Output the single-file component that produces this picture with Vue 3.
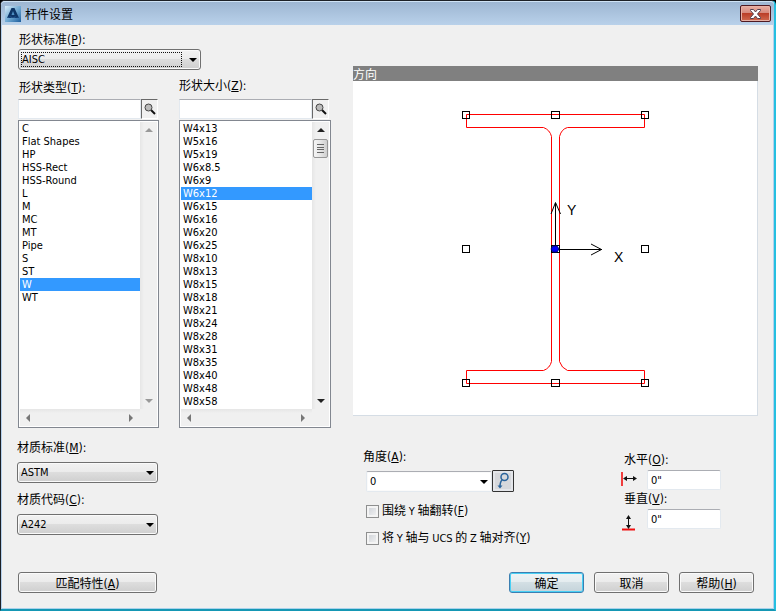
<script setup>
import { ref } from 'vue'

const types = ['C', 'Flat Shapes', 'HP', 'HSS-Rect', 'HSS-Round', 'L', 'M', 'MC', 'MT', 'Pipe', 'S', 'ST', 'W', 'WT']
const sizes = [
  'W4x13', 'W5x16', 'W5x19', 'W6x8.5', 'W6x9', 'W6x12', 'W6x15', 'W6x16', 'W6x20', 'W6x25', 'W8x10',
  'W8x13', 'W8x15', 'W8x18', 'W8x21', 'W8x24', 'W8x28', 'W8x31', 'W8x35', 'W8x40', 'W8x48', 'W8x58',
]
const lists = [
  { id: 'type', label: '形状类型', key: 'T', items: types, scrollable: false },
  { id: 'size', label: '形状大小', key: 'Z', items: sizes, scrollable: true },
]
const picked = ref({ type: 'W', size: 'W6x12' })
const materials = [
  { id: 'mat-std', label: '材质标准', key: 'M', value: 'ASTM' },
  { id: 'mat-code', label: '材质代码', key: 'C', value: 'A242' },
]
const handles = [
  [109.5, 30.5, 7], [198.5, 30.5, 8], [288.5, 30.5, 7],
  [109.5, 164.5, 7], [198.5, 164.5, 8], [288.5, 164.5, 7],
  [109.5, 298.5, 7], [198.5, 298.5, 8], [288.5, 298.5, 7],
]
const horizontal = ref('0"')
const vertical = ref('0"')
</script>

<template>
  <div class="window">
    <header class="titlebar">
      <svg class="logo" width="16" height="16" viewBox="0 0 16 16" aria-hidden="true">
        <defs>
          <linearGradient id="lg" x1="0" y1="0" x2="1" y2="1">
            <stop offset="0" stop-color="#d8ecf8" />
            <stop offset=".55" stop-color="#6aa5d0" />
            <stop offset="1" stop-color="#1c5c9c" />
          </linearGradient>
        </defs>
        <rect width="16" height="16" fill="url(#lg)" />
        <path d="M6.5 2h3l4.500 10-4-1.500L8 12l-2.500-1.500L2 12z" fill="#0d3566" />
        <path d="M8 5l1.500 4h-3z" fill="#4f90c4" />
        <path d="M2 12l4-2 2 1 2-1 4 2-4 0-2-1-2 1z" fill="#123f78" />
      </svg>
      <h1>杆件设置</h1>
      <button class="close" type="button" aria-label="关闭">
        <svg width="13" height="10" viewBox="0 0 13 10">
          <path d="M1.500.500h3l2 2.500 2-2.500h3v1L8.500 5l3 3.500v1h-3l-2-2.500-2 2.500h-3v-1l3-3.500-3-3.500z" fill="#fff" stroke="#52404f" />
        </svg>
      </button>
    </header>

    <main class="body">
      <div class="columns">
        <section class="left">
          <label class="caption" for="shape-std">形状标准<span class="key">(<u>P</u>):</span></label>
          <div class="combo standard">
            <select id="shape-std"><option>AISC</option></select>
            <span class="dots"></span>
            <svg class="arrow" width="8" height="4" viewBox="0 0 8 4"><path d="M0 0h8L4 4z" /></svg>
          </div>

          <div class="lists">
            <div v-for="l in lists" :key="l.id" class="list-col" :class="l.id">
              <label class="caption" :for="l.id">{{ l.label }}<span class="key">(<u>{{ l.key }}</u>):</span></label>
              <div class="search">
                <input type="text" :aria-label="l.label" />
                <button type="button" aria-label="搜索">
                  <svg width="12" height="12" viewBox="0 0 12 12">
                    <path d="M7 7l4 4" stroke="#111" stroke-width="2" />
                    <circle cx="4.500" cy="4.500" r="3.500" fill="#bbb" stroke="#444" />
                  </svg>
                </button>
              </div>
              <div class="listbox">
                <div class="rows">
                  <select :id="l.id" v-model="picked[l.id]" size="22">
                    <option v-for="i in l.items" :key="i" :value="i">{{ i }}</option>
                  </select>
                  <div class="vbar" :class="{ on: l.scrollable }">
                    <svg width="8" height="4" viewBox="0 0 8 4"><path d="M0 4h8L4 0z" /></svg>
                    <span v-if="l.scrollable" class="thumb"><i></i><i></i><i></i><i></i></span>
                    <svg class="end" width="8" height="4" viewBox="0 0 8 4"><path d="M0 0h8L4 4z" /></svg>
                  </div>
                </div>
                <div class="hbar">
                  <svg width="4" height="8" viewBox="0 0 4 8"><path d="M4 0v8L0 4z" /></svg>
                  <svg width="4" height="8" viewBox="0 0 4 8"><path d="M0 0v8l4-4z" /></svg>
                </div>
              </div>
            </div>
          </div>

          <div class="materials">
            <template v-for="m in materials" :key="m.id">
              <label class="caption" :for="m.id">{{ m.label }}<span class="key">(<u>{{ m.key }}</u>):</span></label>
              <div class="combo">
                <select :id="m.id"><option>{{ m.value }}</option></select>
                <svg class="arrow" width="8" height="4" viewBox="0 0 8 4"><path d="M0 0h8L4 4z" /></svg>
              </div>
            </template>
          </div>
        </section>

        <section class="right">
          <div class="preview">
            <h2>方向</h2>
            <svg class="drawing" viewBox="0 0 405 334" role="img" aria-label="方向">
              <path
                d="M113.500 33.500H291.500V46.500H214.500Q208.500 48 206.500 55.500V280.500Q208.500 287 214.500 289.500H291.500V302.500H113.500V289.500H190.500Q197 287 198.500 280.500V55.500Q197 49 190.500 46.500H113.500Z"
                fill="none" stroke="#f00"
              />
              <g fill="none" stroke="#000">
                <rect v-for="(h, n) in handles" :key="n" :x="h[0]" :y="h[1]" :width="h[2]" height="7" />
                <path d="M202.500 168.500V122M198 133L202.500 121.500 207.500 133M202.500 168.500H249M238 163L248.500 168.500 238 174" />
              </g>
              <path d="M200 165h4l2 3-2 3h-4l-2-3z" fill="#00f" stroke="#000080" stroke-width="1" />
              <text x="214" y="134">Y</text>
              <text x="261" y="181">X</text>
            </svg>
          </div>

          <div class="options">
            <div class="angle">
              <label class="caption" for="angle">角度<span class="key">(<u>A</u>):</span></label>
              <div class="angle-row">
                <div class="combo flat">
                  <select id="angle"><option>0</option></select>
                  <svg class="arrow" width="8" height="4" viewBox="0 0 8 4"><path d="M0 0h8L4 4z" /></svg>
                </div>
                <button class="pick" type="button" aria-label="拾取角度">
                  <svg width="14" height="18" viewBox="0 0 14 18" fill="none" stroke="#2a649c">
                    <circle cx="8.500" cy="5" r="3.500" stroke-width="1.500" />
                    <path d="M6 8Q4 10 4 15" stroke-width="1.500" />
                    <path d="M1.500 13.500L4 16.500 6.500 13.500z" fill="#2a649c" stroke="none" />
                  </svg>
                </button>
              </div>
              <label class="check"><input type="checkbox" /><span>围绕 <b>Y</b> 轴翻转<span class="key">(<u>F</u>)</span></span></label>
              <label class="check"><input type="checkbox" /><span>将 <b>Y</b> 轴与 <b>UCS</b> 的 <b>Z</b> 轴对齐<span class="key">(<u>Y</u>)</span></span></label>
            </div>

            <div class="offsets">
              <label class="caption" for="off-h">水平<span class="key">(<u>O</u>):</span></label>
              <div class="offset">
                <svg width="16" height="18" viewBox="0 0 16 18">
                  <path d="M.500 1v14M1.500 1v14" stroke="#f01010" stroke-opacity=".8" />
                  <path d="M3 7.500h12" stroke="#111" />
                  <path d="M2 7.500l4-2.500v5zM16 7.500l-4-2.500v5z" fill="#111" />
                </svg>
                <input id="off-h" v-model="horizontal" type="text" />
              </div>
              <label class="caption" for="off-v">垂直<span class="key">(<u>V</u>):</span></label>
              <div class="offset low">
                <svg width="16" height="18" viewBox="0 0 16 18">
                  <path d="M1 16.500h13" stroke="#f01010" stroke-width="2" />
                  <path d="M7.500 3v12" stroke="#111" />
                  <path d="M7.500 2L5 6h5zM7.500 16L5 12h5z" fill="#111" />
                </svg>
                <input id="off-v" v-model="vertical" type="text" />
              </div>
            </div>
          </div>
        </section>
      </div>

      <footer class="actions">
        <button class="btn wide" type="button">匹配特性<span class="key">(<u>A</u>)</span></button>
        <button class="btn primary" type="button">确定</button>
        <button class="btn" type="button">取消</button>
        <button class="btn" type="button">帮助<span class="key">(<u>H</u>)</span></button>
      </footer>
    </main>
  </div>
</template>

<style>
body {
  background: #000;
}
</style>

<style scoped>
* {
  box-sizing: border-box;
}
.window {
  --latin: "DejaVu Sans Condensed", "Noto Sans", "Noto Sans CJK SC", sans-serif;
  display: flex;
  flex-direction: column;
  min-height: 100vh;
  border: 1px solid #1c2026;
  border-right-width: 2px;
  border-right-color: #25bfe0;
  border-bottom: 2px solid #1597b4;
  border-radius: 5px 5px 0 0;
  background: #f0f0f0;
  box-shadow: inset 1px 0 #b5d0ec, inset -1px 0 #b5d0ec, inset 0 -1px #a9d2ec;
  color: #000;
  font: 12px/16px "Noto Sans CJK SC", sans-serif;
}
input, select, button {
  margin: 0;
  color: #000;
  font: inherit;
}
.key, b {
  font-family: var(--latin);
  font-size: 11px;
  font-weight: normal;
}
.key {
  font-size: 12px;
}
u {
  text-underline-offset: 1px;
}
.titlebar {
  display: flex;
  align-items: center;
  gap: 4px;
  height: 24px;
  padding: 0 3px 0 4px;
  border-top: 1px solid #cfe3f5;
  border-radius: 4px 4px 0 0;
  background: linear-gradient(#9db6d2, #b9d1ea);
}
h1 {
  flex: 1;
  margin: 0;
  font-size: 12px;
  font-weight: normal;
}
.close {
  display: grid;
  place-items: center;
  width: 31px;
  height: 17px;
  padding: 0;
  border: 1px solid #4f1a22;
  border-radius: 2px;
  background: linear-gradient(#e5a69a 0 10%, #d5877b 48%, #bb3e28 50%, #d06a50);
  box-shadow: inset 0 0 0 1px #e7b0a4;
}
.body {
  display: flex;
  flex: 1;
  flex-direction: column;
  padding: 6px 16px 16px;
}
.columns {
  display: flex;
  flex: 1;
  gap: 22px;
}
.left {
  width: 314px;
}
.caption {
  display: block;
  height: 16px;
  padding-left: 2px;
  white-space: nowrap;
}
.combo {
  position: relative;
  width: 141px;
  height: 21px;
}
.combo select {
  display: block;
  width: 100%;
  height: 100%;
  padding: 0 20px 0 3px;
  appearance: none;
  border: 1px solid #707070;
  border-radius: 3px;
  outline: 0;
  background: linear-gradient(#f2f2f2, #ebebeb 48%, #dddddd 50%, #cfcfcf);
  box-shadow: inset 0 0 0 1px #fafafa;
  font: 11px var(--latin);
}
.combo .arrow {
  position: absolute;
  top: 9px;
  right: 4px;
  pointer-events: none;
}
.standard {
  width: 183px;
  margin: 2px 0 7px 1px;
}
.dots {
  position: absolute;
  inset: 3px 19px 3px 3px;
  border: 1px dotted #111;
  pointer-events: none;
}
.lists {
  display: flex;
  align-items: flex-end;
  gap: 20px;
  padding-left: 1px;
}
.list-col {
  display: flex;
  flex-direction: column;
  width: 141px;
}
.list-col.size {
  width: 152px;
}
.list-col .caption {
  padding-left: 1px;
  margin-bottom: 4px;
}
.size .caption {
  padding-left: 0;
  margin-bottom: 6px;
}
.search {
  display: flex;
  width: 140px;
  height: 20px;
  margin-bottom: 1px;
}
.size .search {
  width: 150px;
}
.search input {
  flex: 1;
  min-width: 0;
  padding: 0 3px;
  border: 1px solid #e3e9ef;
  border-top-color: #abadb3;
  outline: 0;
  background: #fff;
}
.search button {
  display: grid;
  place-items: center;
  width: 17px;
  padding: 0;
  border: 1px solid #fff;
  border-top-color: #696969;
  border-left-color: #696969;
  background: #f0f0f0;
}
.listbox {
  padding: 1px;
  border: 1px solid #828790;
  background: #fff;
}
.rows {
  display: flex;
  height: 287px;
}
.rows select {
  flex: 1;
  min-width: 0;
  height: 286px;
  padding: 0;
  overflow: hidden;
  border: 0;
  border-radius: 0;
  outline: 0;
  background: #fff;
  font: 11px var(--latin);
}
.rows option {
  height: 13px;
  min-height: 13px;
  padding: 0 2px;
  color: #000;
  line-height: 13px;
}
.rows option:checked {
  background: #39f linear-gradient(#39f, #39f);
  color: #fff;
}
.vbar {
  display: flex;
  flex-direction: column;
  align-items: center;
  width: 17px;
  padding: 6px 0;
  background: linear-gradient(90deg, #e6e6e6, #f0f0f0 4px);
  fill: #999;
}
.vbar.on {
  fill: #222;
}
.vbar .end {
  margin-top: auto;
}
.thumb {
  display: flex;
  flex-direction: column;
  gap: 1px;
  width: 15px;
  height: 19px;
  margin-top: 7px;
  padding: 4px 3px;
  border: 1px solid #979797;
  border-radius: 2px;
  background: linear-gradient(90deg, #f5f5f5, #e6e6e6 50%, #cfcfcf);
}
.thumb i {
  height: 1px;
  margin-bottom: 1px;
  background: #666;
}
.hbar {
  display: flex;
  align-items: center;
  justify-content: space-between;
  height: 17px;
  margin-right: 17px;
  padding: 0 7px 0 6px;
  background: linear-gradient(#e6e6e6, #f0f0f0 4px);
  box-shadow: 17px 0 #f0f0f0;
  fill: #777;
}
.materials {
  padding-top: 11px;
}
.materials .caption {
  padding-left: 0;
  margin-bottom: 7px;
}
.materials .combo {
  margin-bottom: 8px;
}
.right {
  flex: 1;
  min-width: 0;
  padding-top: 35px;
}
.preview {
  background: #fff;
  box-shadow: 0 1px #d5dde5;
}
h2 {
  height: 15px;
  margin: 0;
  background: #808080;
  color: #fff;
  font-size: 12px;
  font-weight: normal;
  line-height: 15px;
}
.drawing {
  display: block;
  width: 100%;
  box-shadow: inset -1px 0 #d5dde5;
}
.drawing text {
  font: 14px "Liberation Sans", sans-serif;
}
.options {
  display: flex;
  justify-content: space-between;
  padding: 33px 37px 0 10px;
}
.angle .caption {
  padding: 0;
}
.angle-row {
  display: flex;
  align-items: flex-end;
  margin: 6px 0 11px 3px;
}
.combo.flat {
  width: 126px;
}
.flat select {
  border-color: #abadb3 #e3e9ef #e3e9ef;
  border-radius: 2px;
  background: #fff;
}
.pick {
  display: grid;
  place-items: center;
  width: 22px;
  height: 22px;
  padding: 0;
  border: 1px solid #333;
  border-radius: 1px;
  background: #d6d8dc;
  box-shadow: inset 0 0 0 2px #e4e6ea;
}
.check {
  display: flex;
  align-items: center;
  gap: 3px;
  height: 16px;
  margin: 0 0 11px 3px;
  white-space: nowrap;
}
.check input {
  width: 13px;
  height: 13px;
  appearance: none;
  border: 1px solid #8e8f8f;
  background: linear-gradient(135deg, #cbcfd5, #f6f6f6);
  box-shadow: inset 0 0 0 2px #f4f4f4;
}
.offsets {
  padding-top: 3px;
}
.offsets .caption {
  padding-left: 3px;
}
.offset {
  display: flex;
  align-items: center;
  gap: 10px;
  height: 20px;
  margin-top: 3px;
}
.offset input {
  width: 74px;
  height: 20px;
  padding: 0 3px;
  border: 1px solid #e3e9ef;
  border-top-color: #abadb3;
  border-radius: 2px;
  outline: 0;
  background: #fff;
  font: 11px var(--latin);
}
.low svg {
  align-self: flex-start;
  margin-top: 4px;
}
.actions {
  display: flex;
  gap: 10px;
  padding: 0 4px 0 1px;
}
.btn {
  width: 75px;
  height: 21px;
  padding: 0;
  border: 1px solid #707070;
  border-radius: 3px;
  background: linear-gradient(#f2f2f2, #ebebeb 48%, #dddddd 50%, #cfcfcf);
  box-shadow: inset 0 0 0 1px #fafafa;
  line-height: 19px;
}
.btn.wide {
  width: 139px;
  margin-right: auto;
}
.btn.primary {
  border-color: #3c7fb1;
  background: linear-gradient(#eef3f5, #e4ecef 48%, #d3dfe4 50%, #c4d3da);
  box-shadow: inset 0 0 0 1px #48d0f5;
}
</style>
